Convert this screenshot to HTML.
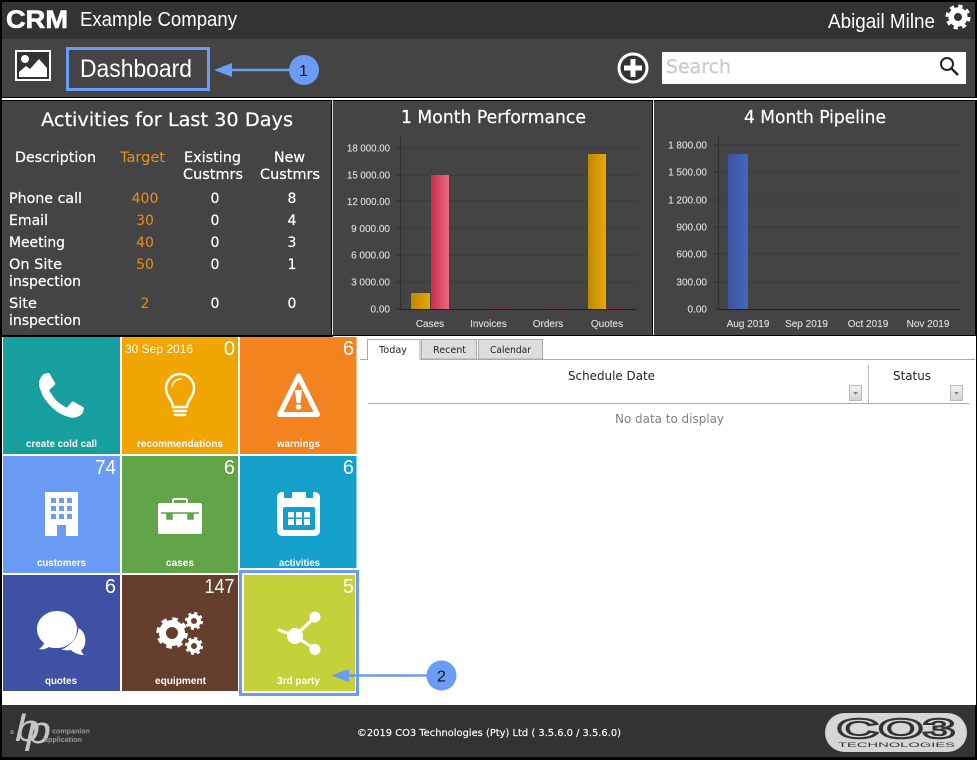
<!DOCTYPE html>
<html><head><meta charset="utf-8"><title>Dashboard</title>
<style>
html,body{margin:0;padding:0;background:#000;width:977px;height:760px;overflow:hidden}
svg{display:block}
text{font-family:"Liberation Sans",sans-serif}
.v text,text.v{font-family:"DejaVu Sans",sans-serif}
.w{fill:#fff}.o{fill:#f08c1e}
.ax text{font-size:10px;fill:#dcdcdc;stroke:#dcdcdc;stroke-width:.15;font-family:"Liberation Sans",sans-serif}
.tl{font-size:10.5px;font-weight:bold;fill:#fff;text-anchor:middle}
.n{font-size:20px;fill:#fff;text-anchor:end}
</style></head><body>
<svg width="977" height="760" viewBox="0 0 977 760" xmlns="http://www.w3.org/2000/svg">
<defs>
<linearGradient id="g" x1="0" x2="1" y1="0" y2="0"><stop offset="0" stop-color="#c08800"/><stop offset="1" stop-color="#e6a800"/></linearGradient>
<linearGradient id="r" x1="0" x2="1" y1="0" y2="0"><stop offset="0" stop-color="#c92f4c"/><stop offset="1" stop-color="#e86880"/></linearGradient>
<linearGradient id="b" x1="0" x2="1" y1="0" y2="0"><stop offset="0" stop-color="#3a55a4"/><stop offset="1" stop-color="#4666b8"/></linearGradient>
<linearGradient id="f" x1="0" x2="0" y1="0" y2="1"><stop offset="0" stop-color="#f2f2f2"/><stop offset="1" stop-color="#d4d4d4"/></linearGradient>
</defs>
<rect width="977" height="760" fill="#000"/>
<!-- header -->
<rect x="2" y="2" width="973" height="37" fill="#333"/>
<rect x="2" y="39" width="973" height="58" fill="#444"/>
<rect x="2" y="98" width="975" height="2" fill="#fff"/>
<text x="6" y="28" font-size="25" font-weight="bold" fill="#fff" stroke="#fff" stroke-width=".6" textLength="62" lengthAdjust="spacingAndGlyphs">CRM</text>
<text x="80" y="26" font-size="20" fill="#fff" textLength="157" lengthAdjust="spacingAndGlyphs">Example Company</text>
<text x="828" y="28" font-size="20" fill="#fff" textLength="107" lengthAdjust="spacingAndGlyphs">Abigail Milne</text>
<g fill="none" stroke="#fff"><circle cx="958" cy="17" r="6.8" stroke-width="5.6"/><circle cx="958" cy="17" r="10.5" stroke-width="4" stroke-dasharray="4.1 4.15"/></g>
<!-- image icon -->
<rect x="16" y="51" width="34" height="29" fill="#333" stroke="#fff" stroke-width="2"/>
<circle cx="25" cy="59" r="4" fill="#fff"/>
<path d="M19 77V72L26 66L30 69L39 59L47 68V77Z" fill="#fff"/>
<!-- dashboard -->
<rect x="67.500" y="48.500" width="141" height="41" fill="none" stroke="#6b9cf5" stroke-width="3"/>
<text x="80" y="77" font-size="25" fill="#fff" textLength="112" lengthAdjust="spacingAndGlyphs">Dashboard</text>
<path d="M229 70H292" stroke="#6b9cf5" stroke-width="2.500"/><path d="M214 70L232 63V77Z" fill="#6b9cf5"/>
<circle cx="304" cy="70" r="15" fill="#6b9cf5"/><text x="303.500" y="76" font-size="16" text-anchor="middle" fill="#111">1</text>
<!-- plus + search -->
<circle cx="633" cy="68" r="14" fill="#333" stroke="#fff" stroke-width="3"/><path d="M633 59V77M624 68H642" stroke="#fff" stroke-width="5"/>
<rect x="662" y="52" width="304" height="32" fill="#fff"/>
<text class="v" x="666" y="73" font-size="19" fill="#cccccc" stroke="#cccccc" stroke-width=".4" textLength="65" lengthAdjust="spacingAndGlyphs">Search</text>
<circle cx="947" cy="64" r="6" fill="none" stroke="#222" stroke-width="2"/><path d="M951.500 68.500L958 75" stroke="#222" stroke-width="2.500"/>
<!-- panels -->
<rect x="2" y="101" width="329" height="234" fill="#444"/>
<rect x="333" y="101" width="319" height="234" fill="#444"/>
<rect x="654" y="101" width="321" height="234" fill="#444"/>
<rect x="332" y="100" width="1" height="235" fill="#ddd"/>
<rect x="653" y="100" width="1" height="235" fill="#fff"/>
<!-- activities -->
<g class="v" stroke="#fff" stroke-width=".2">
<text x="41" y="126" font-size="18.500" fill="#fff" textLength="252" lengthAdjust="spacingAndGlyphs">Activities for Last 30 Days</text>
<g font-size="14" fill="#fff">
<text x="15" y="162" textLength="81" lengthAdjust="spacingAndGlyphs">Description</text>
<text x="120" y="162" class="o" stroke="none" textLength="45" lengthAdjust="spacingAndGlyphs">Target</text>
<text x="184" y="162" textLength="57" lengthAdjust="spacingAndGlyphs">Existing</text>
<text x="183" y="179" textLength="60" lengthAdjust="spacingAndGlyphs">Custmrs</text>
<text x="274" y="162" textLength="31" lengthAdjust="spacingAndGlyphs">New</text>
<text x="260" y="179" textLength="60" lengthAdjust="spacingAndGlyphs">Custmrs</text>
<text x="9" y="203" textLength="73" lengthAdjust="spacingAndGlyphs">Phone call</text>
<text x="9" y="225" textLength="39" lengthAdjust="spacingAndGlyphs">Email</text>
<text x="9" y="247" textLength="56" lengthAdjust="spacingAndGlyphs">Meeting</text>
<text x="9" y="269" textLength="53" lengthAdjust="spacingAndGlyphs">On Site</text>
<text x="9" y="286" textLength="72" lengthAdjust="spacingAndGlyphs">inspection</text>
<text x="9" y="308" textLength="28" lengthAdjust="spacingAndGlyphs">Site</text>
<text x="9" y="325" textLength="72" lengthAdjust="spacingAndGlyphs">inspection</text>
<g text-anchor="middle">
<text x="145" y="203" class="o" stroke="none">400</text><text x="145" y="225" class="o" stroke="none">30</text><text x="145" y="247" class="o" stroke="none">40</text><text x="145" y="269" class="o" stroke="none">50</text><text x="145" y="308" class="o" stroke="none">2</text>
<text x="215" y="203">0</text><text x="215" y="225">0</text><text x="215" y="247">0</text><text x="215" y="269">0</text><text x="215" y="308">0</text>
<text x="292" y="203">8</text><text x="292" y="225">4</text><text x="292" y="247">3</text><text x="292" y="269">1</text><text x="292" y="308">0</text>
</g></g>
<text x="401" y="123" font-size="17.500" fill="#fff" textLength="185" lengthAdjust="spacingAndGlyphs">1 Month Performance</text>
<text x="744" y="123" font-size="17.500" fill="#fff" textLength="142" lengthAdjust="spacingAndGlyphs">4 Month Pipeline</text>
</g>
<!-- chart 1 -->
<path d="M400 148H637M400 175H637M400 201H637M400 228H637M400 255H637M400 282H637" stroke="#3a3a3a"/>
<path d="M400.500 137V309M396 148H400M396 175H400M396 201H400M396 228H400M396 255H400M396 282H400M396 309H400" stroke="#2f2f2f"/>
<rect x="411" y="293" width="19" height="16" fill="url(#g)"/>
<rect x="431" y="175" width="18" height="134" fill="url(#r)"/>
<rect x="588" y="154" width="18" height="155" fill="url(#g)"/>
<path d="M490 309H508M548 309H566M606 309H626" stroke="#a02a40" stroke-width="1"/>
<path d="M400 309.500H637" stroke="#222"/>
<g class="ax"><g text-anchor="end">
<text x="390" y="151.500" textLength="43" lengthAdjust="spacingAndGlyphs">18 000.00</text><text x="390" y="178.500" textLength="43" lengthAdjust="spacingAndGlyphs">15 000.00</text><text x="390" y="205" textLength="43" lengthAdjust="spacingAndGlyphs">12 000.00</text><text x="390" y="232">9 000.00</text><text x="390" y="258.500">6 000.00</text><text x="390" y="285.500">3 000.00</text><text x="390" y="312.500">0.00</text></g>
<g text-anchor="middle"><text x="430" y="327">Cases</text><text x="488.500" y="327">Invoices</text><text x="548" y="327">Orders</text><text x="607" y="327">Quotes</text></g></g>
<!-- chart 2 -->
<path d="M718 145H960M718 172H960M718 200H960M718 227H960M718 254H960M718 282H960" stroke="#3a3a3a"/>
<path d="M718.500 137V309M714 145H718M714 172H718M714 200H718M714 227H718M714 254H718M714 282H718M714 309H718" stroke="#2f2f2f"/>
<rect x="728" y="154" width="20" height="155" fill="url(#b)"/>
<path d="M718 309.500H960" stroke="#222"/>
<g class="ax"><g text-anchor="end">
<text x="707" y="148.500">1 800.00</text><text x="707" y="175.500">1 500.00</text><text x="707" y="203.500">1 200.00</text><text x="707" y="230.500">900.00</text><text x="707" y="257.500">600.00</text><text x="707" y="285.500">300.00</text><text x="707" y="312.500">0.00</text></g>
<g text-anchor="middle"><text x="748" y="327">Aug 2019</text><text x="806.500" y="327">Sep 2019</text><text x="868" y="327">Oct 2019</text><text x="928" y="327">Nov 2019</text></g></g>
<!-- white content -->
<rect x="2" y="337" width="974" height="368" fill="#fff"/>
<rect x="333" y="336" width="643" height="1" fill="#fff"/>
<!-- tiles -->
<rect x="3" y="337" width="117" height="117" fill="#169f9c"/>
<rect x="122" y="337" width="116" height="117" fill="#f0a500"/>
<rect x="240" y="337" width="116.500" height="117" fill="#f2831e"/>
<rect x="3" y="456" width="117" height="117" fill="#6b9cf5"/>
<rect x="122" y="456" width="116" height="117" fill="#61a548"/>
<rect x="240" y="456" width="116.500" height="112" fill="#14a0cb"/>
<rect x="3" y="575" width="117" height="116" fill="#3f51a5"/>
<rect x="122" y="575" width="116" height="116" fill="#663e2e"/>
<rect x="244" y="575" width="111" height="116" fill="#c4d13a"/>
<rect x="240.500" y="571.500" width="117" height="123" fill="none" stroke="#6b9cf5" stroke-width="3"/>
<text class="tl" x="61.500" y="447" textLength="71" lengthAdjust="spacingAndGlyphs">create cold call</text>
<text class="tl" x="180" y="447" textLength="86" lengthAdjust="spacingAndGlyphs">recommendations</text>
<text class="tl" x="298.500" y="447" textLength="43" lengthAdjust="spacingAndGlyphs">warnings</text>
<text class="tl" x="61.500" y="566" textLength="49" lengthAdjust="spacingAndGlyphs">customers</text>
<text class="tl" x="180" y="566" textLength="28" lengthAdjust="spacingAndGlyphs">cases</text>
<text class="tl" x="299.500" y="566" textLength="41" lengthAdjust="spacingAndGlyphs">activities</text>
<text class="tl" x="61" y="684" textLength="32" lengthAdjust="spacingAndGlyphs">quotes</text>
<text class="tl" x="180.500" y="684" textLength="51" lengthAdjust="spacingAndGlyphs">equipment</text>
<text class="tl" x="298.500" y="684" textLength="43" lengthAdjust="spacingAndGlyphs">3rd party</text>
<text x="125" y="353" font-size="12" fill="#fff" textLength="68" lengthAdjust="spacingAndGlyphs">30 Sep 2016</text>
<text class="n" x="235" y="355">0</text><text class="n" x="354" y="355">6</text>
<text class="n" x="116" y="474" textLength="21" lengthAdjust="spacingAndGlyphs">74</text><text class="n" x="235" y="474">6</text><text class="n" x="354" y="474">6</text>
<text class="n" x="116" y="593">6</text><text class="n" x="234.500" y="593" textLength="30" lengthAdjust="spacingAndGlyphs">147</text><text class="n" x="354" y="593">5</text>
<!-- phone -->
<path transform="translate(39 373) scale(.0318)" fill="#fff" d="M1408 1112q0 27-10 70.500t-21 68.500q-21 50-122 106-94 51-186 51-27 0-53-3.500t-57.500-12.500-47-14.500-55.500-20.500-49-18q-98-35-175-83-127-79-264-216t-216-264q-48-77-83-175-3-9-18-49t-20.500-55.500-14.500-47-12.500-57.500-3.500-53q0-92 51-186 56-101 106-122 25-11 68.500-21t70.500-10q14 0 21 3 18 6 53 76 11 19 30 54t35 63.500 31 53.500q3 4 17.500 25t21.500 35.500 7 28.500q0 20-28.500 50t-62 55-62 53-28.500 46q0 9 5 22.500t8.500 20.500 14 24 11.500 19q76 137 174 235t235 174q2 1 19 11.500t24 14 20.500 8.500 22.500 5q18 0 46-28.500t53-62 55-62 50-28.500q14 0 28.500 7t35.500 21.500 25 17.500q25 15 53.500 31t63.500 35 54 30q70 35 76 53 3 7 3 21z"/>
<!-- bulb -->
<g fill="none" stroke="#fff" stroke-width="2.500" stroke-linecap="round">
<path d="M173 407C173 400 166 397 166 388A14 14 0 1 1 194 388C194 397 187 400 187 407Z"/>
<path d="M174 411H186M175 415H185" /><path d="M172 386A9 9 0 0 1 181 379" stroke-width="1.500"/>
</g>
<!-- warning -->
<path d="M298.500 376L279.500 414.500H317.500Z" fill="#f2831e" stroke="#fff" stroke-width="5" stroke-linejoin="round"/>
<path d="M295 390H302L300.500 403H296.500Z" fill="#fff"/><circle cx="298.500" cy="407" r="2.800" fill="#fff"/>
<!-- building -->
<rect x="45" y="492" width="33" height="44" fill="#fff"/>
<g fill="#6b9cf5"><rect x="51" y="498" width="5" height="5"/><rect x="59" y="498" width="5" height="5"/><rect x="67" y="498" width="5" height="5"/><rect x="51" y="506" width="5" height="5"/><rect x="59" y="506" width="5" height="5"/><rect x="67" y="506" width="5" height="5"/><rect x="51" y="514" width="5" height="5"/><rect x="59" y="514" width="5" height="5"/><rect x="67" y="514" width="5" height="5"/><rect x="57" y="525" width="9" height="11"/></g>
<!-- briefcase -->
<rect x="173" y="499" width="14" height="7" rx="1.500" fill="none" stroke="#fff" stroke-width="2"/>
<rect x="158" y="503" width="44" height="31" rx="2" fill="#fff"/>
<path d="M161 513H199M167 513H172V519H167ZM188 513H193V519H188Z" fill="#61a548" stroke="#61a548" stroke-width="1.500"/>
<!-- calendar -->
<rect x="277" y="492" width="43" height="44" rx="5" fill="#fff"/>
<rect x="284" y="491" width="8" height="7" fill="#14a0cb"/><rect x="306" y="491" width="7" height="7" fill="#14a0cb"/>
<rect x="283" y="507" width="32" height="23" rx="2" fill="#14a0cb"/>
<g fill="#fff"><rect x="288" y="512" width="6" height="5.500"/><rect x="296" y="512" width="6" height="5.500"/><rect x="304" y="512" width="6" height="5.500"/><rect x="288" y="519" width="6" height="6"/><rect x="296" y="519" width="6" height="6"/><rect x="304" y="519" width="6" height="6"/></g>
<!-- chat -->
<path d="M76 627C85 630 86 638 85 644C84 648 82 650 81 650C82 653 83 654 84 655C79 655 74 653 71 650C67 651 62 650 57 648Z" fill="#fff"/>
<path d="M77 628C76 640 65 648 57 649" fill="none" stroke="#3f51a5" stroke-width="3"/>
<path d="M57 611C68 611 77 619 77 629C77 640 68 648 57 648C54 648 51 648 49 647C46 649 42 650 39 649C42 647 44 645 44 643C40 640 37 635 37 629C37 619 46 611 57 611Z" fill="#fff"/>
<!-- gears -->
<g fill="none" stroke="#fff">
<circle cx="172" cy="633" r="9.500" stroke-width="7"/><circle cx="172" cy="633" r="13.500" stroke-width="4.500" stroke-dasharray="5.300 5.300"/>
<circle cx="194" cy="621" r="5" stroke-width="4"/><circle cx="194" cy="621" r="7.500" stroke-width="3" stroke-dasharray="2.950 2.940"/>
<circle cx="194" cy="646" r="5" stroke-width="4"/><circle cx="194" cy="646" r="7.500" stroke-width="3" stroke-dasharray="2.950 2.940"/>
</g>
<!-- share -->
<path d="M315 617L295 636L315 649M295 636L279 630" stroke="#fff" stroke-width="3" fill="none" stroke-linecap="round"/>
<circle cx="295" cy="636" r="8" fill="#fff"/><circle cx="315" cy="617" r="5.500" fill="#fff"/><circle cx="315" cy="649.500" r="5.500" fill="#fff"/>
<!-- arrow 2 -->
<path d="M346 675.500H430" stroke="#6b9cf5" stroke-width="2.500"/><path d="M331 675.500L349 669V682Z" fill="#6b9cf5"/>
<circle cx="441.500" cy="675.500" r="15" fill="#6b9cf5"/><text x="441.500" y="681.500" font-size="16" text-anchor="middle" fill="#111">2</text>
<!-- tabs -->
<path d="M360 359.500H367.500V339.500H420V359.500" fill="#fff" stroke="#aaa"/>
<path d="M421.500 359V339.500H476.500V359Z" fill="#ddd" stroke="#aaa"/>
<path d="M478.500 359V339.500H542.500V359Z" fill="#ddd" stroke="#aaa"/>
<path d="M420 359.500H975" stroke="#aaa"/>
<g class="v" font-size="10" fill="#222">
<text x="379" y="353" textLength="28" lengthAdjust="spacingAndGlyphs">Today</text>
<text x="433" y="353" textLength="33" lengthAdjust="spacingAndGlyphs">Recent</text>
<text x="490" y="353" textLength="41" lengthAdjust="spacingAndGlyphs">Calendar</text>
</g>
<g class="v" font-size="12" fill="#222">
<text x="568" y="380" textLength="87" lengthAdjust="spacingAndGlyphs">Schedule Date</text>
<text x="893" y="380" textLength="38" lengthAdjust="spacingAndGlyphs">Status</text>
</g>
<path d="M368 403.500H969" stroke="#aaa"/><path d="M868.500 365V403" stroke="#bbb"/>
<rect x="849.500" y="385.500" width="12" height="15" fill="url(#f)" stroke="#bbb"/><path d="M853 392H858L855.500 395Z" fill="#888"/>
<rect x="950.500" y="385.500" width="12" height="15" fill="url(#f)" stroke="#bbb"/><path d="M954 392H959L956.500 395Z" fill="#888"/>
<text class="v" x="615" y="423" font-size="12" fill="#808080" textLength="109" lengthAdjust="spacingAndGlyphs">No data to display</text>
<!-- footer -->
<rect x="2" y="705" width="973" height="52" fill="#333"/>
<g fill="#c4c4c4">
<text x="15" y="741" font-size="38" font-style="italic" textLength="25" lengthAdjust="spacingAndGlyphs">b</text>
<text x="26" y="743" font-size="38" font-style="italic" textLength="25" lengthAdjust="spacingAndGlyphs">p</text>
<text x="10" y="734" font-size="7" font-weight="bold" fill="#999">a</text>
<text x="52" y="733.500" font-size="7" font-weight="bold" fill="#999" textLength="38" lengthAdjust="spacingAndGlyphs">companion</text>
<text x="44" y="742" font-size="7" font-weight="bold" fill="#999" textLength="38" lengthAdjust="spacingAndGlyphs">application</text>
</g>
<text class="v" x="357" y="736" font-size="10" fill="#fff" stroke="#fff" stroke-width=".15" textLength="264" lengthAdjust="spacingAndGlyphs">©2019 CO3 Technologies (Pty) Ltd ( 3.5.6.0 / 3.5.6.0)</text>
<rect x="825" y="713" width="142" height="39" rx="19.500" fill="#d6d6d6"/>
<text x="837" y="738" font-size="28" font-weight="bold" fill="#d6d6d6" stroke="#333" stroke-width="2" textLength="118" lengthAdjust="spacingAndGlyphs">CO3</text>
<text x="838" y="747" font-size="6.500" fill="#333" textLength="117" lengthAdjust="spacingAndGlyphs">TECHNOLOGIES</text>
</svg>
</body></html>
